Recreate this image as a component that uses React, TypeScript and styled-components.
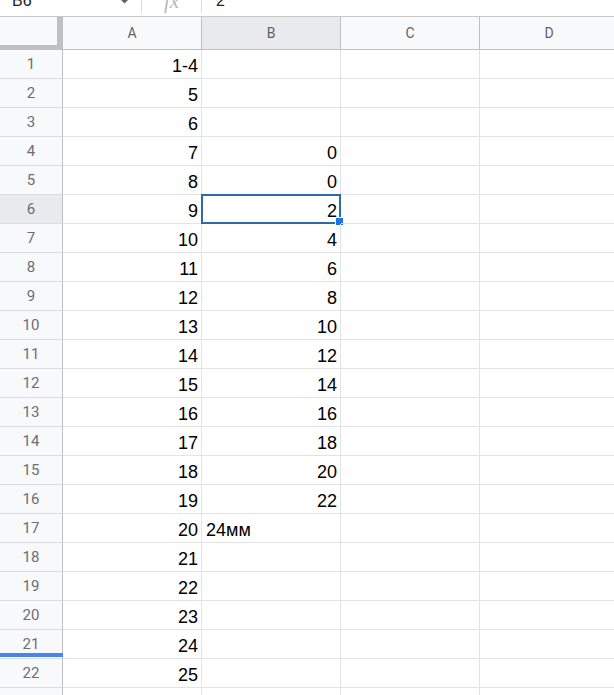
import styled, { createGlobalStyle } from 'styled-components'

const GlobalStyle = createGlobalStyle`
  html, body {
    margin: 0;
    padding: 0;
    background: #fff;
    overflow: hidden;
  }
  body {
    font-family: 'Liberation Sans', Arial, sans-serif;
  }
`

const Page = styled.div`
  width: 614px;
  height: 695px;
  overflow: hidden;
`

// formula bar is scrolled so only its lower part shows
const FormulaBar = styled.div`
  display: flex;
  align-items: flex-end;
  height: 16px;
  border-bottom: 1px solid #c7c7c7;
  overflow: hidden;
  color: #202124;
`

const NameBox = styled.div`
  display: flex;
  align-self: stretch;
  align-items: flex-end;
  justify-content: space-between;
  width: 141px;
  box-sizing: border-box;
  padding: 0 13px 0 12px;
`

const BarText = styled.span`
  font-size: 16px;
  line-height: 18px;
  padding-bottom: 6px;
`

const Caret = styled.svg`
  align-self: flex-start;
`

const Divider = styled.div`
  align-self: flex-start;
  width: 1px;
  height: 13px;
  background: #dadce0;
`

const Fx = styled.div`
  width: 59px;
  text-align: center;
  font-family: 'Liberation Serif', serif;
  font-style: italic;
  font-size: 21px;
  line-height: 18px;
  padding-bottom: 6px;
  color: #b5b9be;
`

const Value = styled(BarText)`
  padding-left: 14px;
`

const Grid = styled.div`
  display: grid;
  grid-template-columns: 63px repeat(4, 139px);
  grid-template-rows: 33px;
  grid-auto-rows: 29px;
`

const Corner = styled.div`
  box-sizing: border-box;
  background: #f8f9fa;
  border-right: 6px solid #c0c0c0;
  border-bottom: 5px solid #c0c0c0;
  box-shadow: 0 1px 0 #c0c0c0;
`

const ColHeader = styled.div<{ $active?: boolean }>`
  box-sizing: border-box;
  display: flex;
  align-items: center;
  justify-content: center;
  background: ${(p) => (p.$active ? '#e8eaed' : '#f8f9fa')};
  border-right: 1px solid #c0c0c0;
  border-bottom: 1px solid #c0c0c0;
  font-family: Roboto, 'Liberation Sans', sans-serif;
  font-size: 14px;
  color: #5f6368;
`

const RowHeader = styled.div<{ $active?: boolean }>`
  position: relative;
  box-sizing: border-box;
  display: flex;
  align-items: center;
  justify-content: center;
  background: ${(p) => (p.$active ? '#e8eaed' : '#f8f9fa')};
  border-right: 1px solid #c0c0c0;
  border-bottom: 1px solid #dadce0;
  font-family: Roboto, 'Liberation Sans', sans-serif;
  font-size: 15px;
  color: #6b6f74;
`

const ResizeMarker = styled.div`
  position: absolute;
  left: 0;
  right: -1px;
  bottom: 1px;
  height: 4px;
  background: #4a86e8;
`

const Cell = styled.div<{ $align?: 'left' | 'right' }>`
  position: relative;
  box-sizing: border-box;
  display: flex;
  align-items: flex-end;
  justify-content: ${(p) => (p.$align === 'left' ? 'flex-start' : 'flex-end')};
  padding: 0 3px 3px 4px;
  border-right: 1px solid #e2e3e3;
  border-bottom: 1px solid #e2e3e3;
  font-size: 18px;
  line-height: 18px;
  color: #000;
  white-space: nowrap;
`

const Selection = styled.div`
  position: absolute;
  top: -1px;
  left: -1px;
  right: -1px;
  bottom: -1px;
  border: 2px solid #2c6aa8;
  pointer-events: none;
`

const Handle = styled.div`
  position: absolute;
  right: -5px;
  bottom: -4px;
  width: 7px;
  height: 7px;
  background: #1a73e8;
  border: 1px solid #fff;
`

const columns = ['A', 'B', 'C', 'D']

const colA = (row: number) => (row === 1 ? '1-4' : row <= 22 ? String(row + 3) : '')
const colB = (row: number) => {
  if (row === 4 || row === 5) return '0'
  if (row >= 6 && row <= 16) return String((row - 5) * 2)
  if (row === 17) return '24мм'
  return ''
}

const rows = Array.from({ length: 23 }, (_, i) => i + 1)

export default function App() {
  return (
    <Page>
      <GlobalStyle />
      <FormulaBar>
        <NameBox>
          <BarText>B6</BarText>
          <Caret width="7" height="4" viewBox="0 0 7 4">
            <polygon points="0,0 7,0 3.5,3.5" fill="#5f6368" />
          </Caret>
        </NameBox>
        <Divider />
        <Fx>fx</Fx>
        <Divider />
        <Value>2</Value>
      </FormulaBar>
      <Grid>
        <Corner />
        {columns.map((c) => (
          <ColHeader key={c} $active={c === 'B'}>
            {c}
          </ColHeader>
        ))}
        {rows.map((r) => {
          const b = colB(r)
          return [
            <RowHeader key={`h${r}`} $active={r === 6}>
              {r}
              {r === 21 && <ResizeMarker />}
            </RowHeader>,
            <Cell key={`a${r}`}>{colA(r)}</Cell>,
            <Cell key={`b${r}`} $align={r === 17 ? 'left' : 'right'}>
              {b}
              {r === 6 && (
                <Selection>
                  <Handle />
                </Selection>
              )}
            </Cell>,
            <Cell key={`c${r}`} />,
            <Cell key={`d${r}`} />,
          ]
        })}
      </Grid>
    </Page>
  )
}
